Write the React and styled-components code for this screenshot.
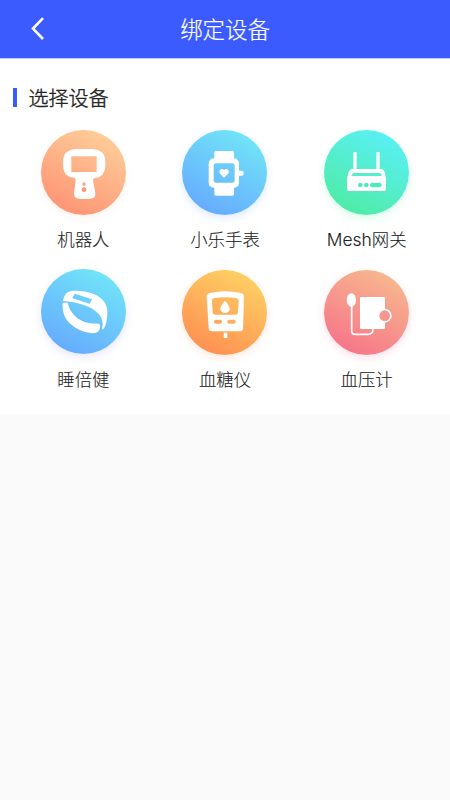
import React from 'react'
import styled, { createGlobalStyle } from 'styled-components'

const GlobalStyle = createGlobalStyle`
  * {
    box-sizing: border-box;
  }
  body {
    margin: 0;
    background: #fafafa;
    font-family: 'Noto Sans CJK SC', sans-serif;
  }
`

const RobotIcon = () => (
  <Icon viewBox='0 0 255 255'>
    <path
      fill='#fff'
      fillRule='evenodd'
      d='M108 57H151Q193 58 193 95V104Q193 141 161 144Q155 145 156 153L163 190Q164 207 144 207H118Q98 207 99 190L104 153Q105 145 100 143Q66 141 66 104V95Q66 58 108 57ZM91 79V126H167V79Z'
    />
    <circle cx='129' cy='162' r='5' fill='#fd9c78' />
    <circle cx='129' cy='179' r='7' fill='#fd9476' />
  </Icon>
)

const WatchIcon = () => (
  <Icon viewBox='0 0 255 255'>
    <g fill='#fff'>
      <path d='M101 63H152Q156 63 156 68V90H97V68Q97 63 101 63ZM97 168H156V192Q156 197 151 197H102Q97 197 97 192Z' />
      <rect x='165' y='122' width='20' height='15' rx='6' />
      <path
        fillRule='evenodd'
        d='M98 85H154Q171 85 171 102V157Q171 174 154 174H98Q80 174 80 157V102Q80 85 98 85ZM103 100Q95 100 95 108V150Q95 158 103 158H150Q158 158 158 150V108Q158 100 150 100Z'
      />
      <path d='M126 143L115 132C107 122 119 111 126 121C133 111 146 122 138 132Z' />
    </g>
  </Icon>
)

const RouterIcon = () => (
  <Icon viewBox='0 0 255 255'>
    <g fill='#fff'>
      <rect x='88' y='66' width='10' height='60' rx='4' />
      <rect x='157' y='66' width='10' height='60' rx='4' />
      <path
        fillRule='evenodd'
        d='M83 117H172Q179 117 182 126L186 145V177Q186 183 180 183H75Q69 183 69 177V145L74 126Q77 117 83 117ZM88 129L81 138H174L169 129Z'
      />
    </g>
    <g fill='#4feac0'>
      <circle cx='109' cy='165' r='7' />
      <circle cx='127' cy='165' r='7' />
      <rect x='138' y='158' width='35' height='14' rx='7' />
    </g>
  </Icon>
)

const BandIcon = () => (
  <Icon viewBox='0 0 255 255'>
    <g fill='#fff'>
      <path
        fillRule='evenodd'
        d='M66 96C69 80 76 68 91 66C111 64 138 67 160 76C185 87 199 105 199 128C199 150 195 171 187 180C184 182 182 180 184 175C187 161 184 148 174 136C153 111 108 99 66 96ZM101 74L94 88L146 104L153 91Z'
      />
      <path d='M65 101L80 101C86 130 109 155 143 162C155 165 166 162 176 165Q181 188 162 192C137 195 106 182 86 163C67 144 64 123 65 101Z' />
    </g>
  </Icon>
)

const GlucoseIcon = () => (
  <Icon viewBox='0 0 255 255'>
    <g fill='#fff'>
      <path
        fillRule='evenodd'
        d='M84 69Q130 59 176 69Q186 71 186 80L183 175Q183 184 174 184H90Q80 184 80 175L74 80Q74 71 84 69ZM96 84Q90 86 90 93L92 126Q93 134 101 134H161Q168 134 168 126L170 93Q170 86 163 84Q130 79 96 84ZM102 149Q96 149 96 155T102 161H114Q120 161 120 155T114 149ZM142 149Q136 149 136 155T142 161H155Q161 161 161 155T155 149Z'
      />
      <path d='M129 92Q143 108 143 116A14 13 0 0 1 115 116Q115 108 129 92Z' />
      <rect x='125' y='188' width='11' height='16' />
    </g>
  </Icon>
)

const PressureIcon = () => (
  <Icon viewBox='0 0 255 255'>
    <path
      d='M83 105V182Q83 193 95 193H132Q147 193 147 177'
      fill='none'
      stroke='#fff'
      strokeWidth='5'
    />
    <ellipse cx='82' cy='90' rx='14' ry='20' fill='#fff' />
    <rect x='108' y='81' width='75' height='96' rx='4' fill='#fff' />
    <circle cx='182' cy='137' r='21' fill='#fff' />
    <circle cx='182' cy='137' r='16' fill='#f6958b' />
  </Icon>
)

const devices = [
  { name: '机器人', icon: <RobotIcon />, from: '#ff8d71', to: '#fdd29b', glow: '#ff9a711f' },
  { name: '小乐手表', icon: <WatchIcon />, from: '#65a4ff', to: '#72e9f7', glow: '#65a7ff38' },
  { name: 'Mesh网关', icon: <RouterIcon />, from: '#4eeb9d', to: '#5af0fb', glow: '#4eeb9d38' },
  { name: '睡倍健', icon: <BandIcon />, from: '#65a4ff', to: '#72e9f7', glow: '#7f75ff30', lift: true },
  { name: '血糖仪', icon: <GlucoseIcon />, from: '#ff8850', to: '#fdd565', glow: '#ff885030' },
  { name: '血压计', icon: <PressureIcon />, from: '#f66d89', to: '#f7bd8e', glow: '#f66d8938' },
]

const App = () => {
  return (
    <Page>
      <GlobalStyle />
      <Header>
        <BackButton aria-label='返回'>
          <svg width='16' height='24' viewBox='0 0 16 24'>
            <path d='M13 2.2L3 12.6L13 23' fill='none' stroke='#fff' strokeWidth='2.6' />
          </svg>
        </BackButton>
        <Title>绑定设备</Title>
      </Header>
      <Panel>
        <SectionTitle>选择设备</SectionTitle>
        <DeviceGrid>
          {devices.map(({ name, icon, from, to, glow, lift }) => (
            <Device key={name}>
              <Disc $from={from} $to={to} $glow={glow} $lift={lift}>
                {icon}
              </Disc>
              <Name>{name}</Name>
            </Device>
          ))}
        </DeviceGrid>
      </Panel>
    </Page>
  )
}

const Page = styled.main`
  min-height: 100vh;
  background: #fafafa;
`
const Header = styled.header`
  display: grid;
  grid-template-columns: 60px 1fr 60px;
  align-items: center;
  height: 59px;
  padding-bottom: 2px;
  border-bottom: 1px solid #c3cdff;
  background: #3c5bff;
  color: #fff;
`
const BackButton = styled.button`
  display: flex;
  padding: 0 0 0 30px;
  border: 0;
  background: none;
`
const Title = styled.h1`
  margin: 0;
  font-size: 22.4px;
  font-weight: 300;
  line-height: 32px;
  text-align: center;
  -webkit-text-stroke: 0.2px;
`
const Panel = styled.section`
  height: 355px;
  padding: 23px 12.5px 0;
  background: #fff;
`
const SectionTitle = styled.h2`
  display: flex;
  align-items: center;
  gap: 12px;
  height: 30px;
  margin: 0;
  color: #222;
  font-size: 20px;
  font-weight: 300;
  -webkit-text-stroke: 0.4px;

  &::before {
    content: '';
    width: 4px;
    height: 19px;
    background: #3c5bff;
  }
`
const DeviceGrid = styled.div`
  display: grid;
  grid-template-columns: repeat(3, 1fr);
  grid-auto-rows: 139.5px;
  padding-top: 18.3px;
`
const Device = styled.div`
  display: flex;
  flex-direction: column;
  align-items: center;
`
const Disc = styled.div`
  width: 85px;
  height: 85px;
  margin-top: ${({ $lift }) => ($lift ? '-1px' : '0')};
  margin-bottom: ${({ $lift }) => ($lift ? '1px' : '0')};
  border-radius: 50%;
  background: linear-gradient(208deg, ${({ $to }) => $to} 5%, ${({ $from }) => $from} 98%);
  box-shadow: 0 3px 8px ${({ $glow }) => $glow};
`
const Icon = styled.svg`
  display: block;
  width: 100%;
  height: 100%;
`
const Name = styled.span`
  margin-top: 12px;
  color: #222;
  font-family: Inter, 'Noto Sans CJK SC', sans-serif;
  font-size: 17.4px;
  font-weight: 300;
  line-height: 26px;
  -webkit-text-stroke: 0.1px;
`
export default App
